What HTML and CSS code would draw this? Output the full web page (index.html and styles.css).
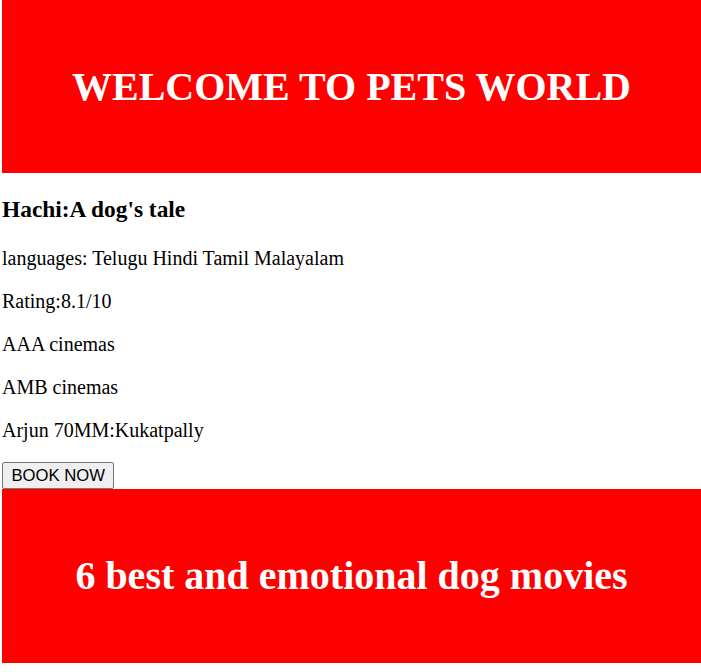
FILE: index.html
```html
<!DOCTYPE html>
<html>
<head>
<meta charset="utf-8">
<title>Pets World</title>
<link rel="stylesheet" href="styles.css">
</head>
<body>
  <header class="banner banner-top">
    <h1 class="banner-title">WELCOME TO PETS WORLD</h1>
  </header>
  <main class="movie">
    <h3 class="movie-title">Hachi:A dog's tale</h3>
    <p class="movie-line">languages: Telugu Hindi Tamil Malayalam</p>
    <p class="movie-line">Rating:8.1/10</p>
    <p class="movie-line">AAA cinemas</p>
    <p class="movie-line">AMB cinemas</p>
    <p class="movie-line">Arjun 70MM:Kukatpally</p>
    <button class="book-btn" type="button">BOOK NOW</button>
  </main>
  <section class="banner banner-bottom">
    <h2 class="banner-title">6 best and emotional dog movies</h2>
  </section>
</body>
</html>
```
FILE: styles.css
```css
html, body {
  background: #ffffff;
}
body {
  margin: 0 0 0 2px;
  font-family: "Liberation Serif", "Times New Roman", serif;
  font-size: 20px;
  color: #000000;
  padding-bottom: 9px;
}
.banner {
  background: #ff0000;
  display: flex;
  align-items: center;
  justify-content: center;
}
.banner-top {
  height: 173px;
}
.banner-bottom {
  height: 174px;
}
.banner-title {
  margin: 0;
  color: #ffffff;
  font-size: 40px;
  font-weight: bold;
  text-align: center;
}
.movie {
  display: block;
}
.movie-title {
  font-size: 23.4px;
  font-weight: bold;
  margin: 23.4px 0;
}
.movie-line {
  margin: 20px 0;
}
.book-btn {
  display: block;
  margin: 0;
  font-family: "Liberation Sans", Arial, sans-serif;
  font-size: 16.67px;
  line-height: 19px;
  height: 27px;
  padding: 3px 8.5px;
  border: 1px solid #767676;
  border-radius: 2px;
  background: #efefef;
  color: #000000;
}
```
